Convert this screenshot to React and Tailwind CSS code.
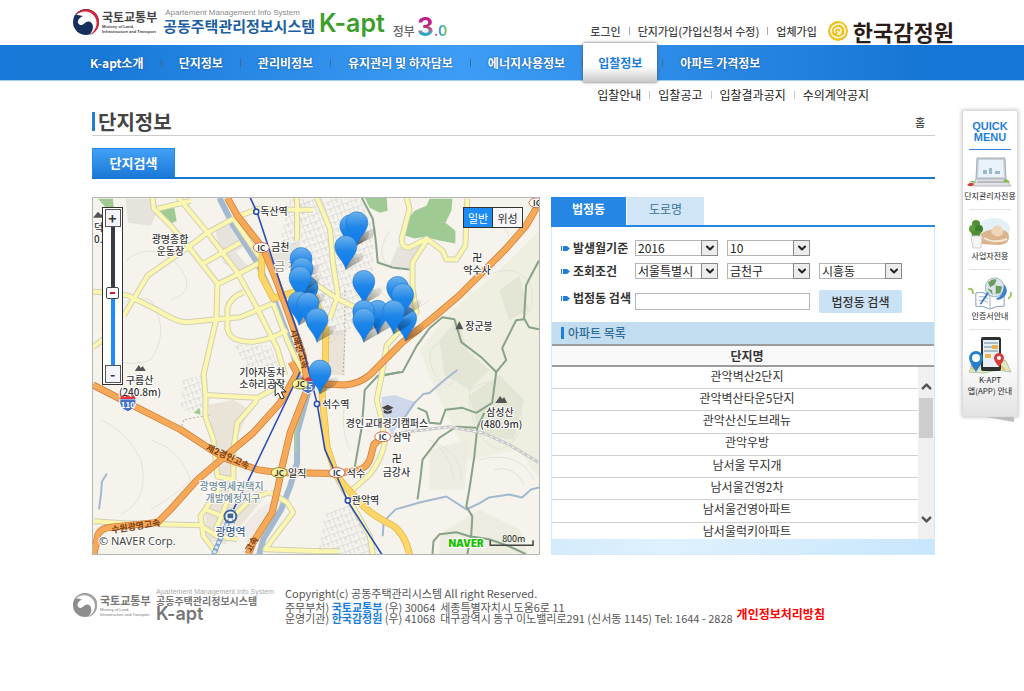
import React, { useState } from "react";
import { ChevronDown, ChevronUp } from "lucide-react";

const topLinks = ["로그인", "단지가입(가입신청서 수정)", "업체가입"];
const menus = [
  "K-apt소개",
  "단지정보",
  "관리비정보",
  "유지관리 및 하자담보",
  "에너지사용정보",
  "입찰정보",
  "아파트 가격정보",
];
const subMenus = ["입찰안내", "입찰공고", "입찰결과공지", "수의계약공지"];
const apartments = [
  "관악벽산2단지",
  "관악벽산타운5단지",
  "관악산신도브래뉴",
  "관악우방",
  "남서울 무지개",
  "남서울건영2차",
  "남서울건영아파트",
  "남서울럭키아파트",
];

// Map coordinates share one system: x 92-540, y 197-555
const localRoads = [
  "M92 291 L127 295 L157 310 Q176 322 186 322 L217 319 L240 317 L273 303",
  "M123 315 L147 275 L187 247 L207 232 L233 218 L257 208 L293 209 L313 209",
  "M152 197 L153 208 L170 225 L187 245 L217 283 L216 318 L203 375",
  "M178 197 L207 232 L237 272 L257 308 L277 348 L285 375",
  "M217 284 L237 274 L260 262",
  "M203 263 L240 242",
  "M157 208 L178 203 L190 200",
  "M227 330 L227 308 Q230 297 243 292",
  "M227 328 Q229 338 238 340 Q258 346 287 330",
  "M273 303 L287 340 L303 375",
  "M233 218 L250 243 L262 260",
  "M297 197 L297 240",
  "M92 347 L104 338",
  "M203 373 L205 395 L205 417 L213 440 L217 477 L233 480",
  "M205 395 L257 398 L277 387",
  "M257 400 L237 423 L233 450 L233 480",
  "M93 522 L123 524 L200 526 L217 537 L237 540",
  "M223 483 L200 517 L203 537 L217 555",
  "M205 510 L230 520 L250 500 L268 493",
  "M235 480 L222 515 L215 530",
  "M270 493 L287 503 L293 513 L265 550 L320 552",
  "M317 197 L330 228 L333 262 L338 295 L330 318",
  "M92 552 L96 545",
  "M407 197 L410 208 L402 238 Q402 248 410 247 L427 238 L443 250 L447 259 L457 259 L466 245 L468 198",
  "M427 240 L413 262 L413 288 L417 312 L387 345 L382 375 L377 400 L382 420 L385 443 Q382 460 370 475 L353 490",
  "M313 282 L337 298 L377 318",
  "M338 480 L370 537 L373 555",
  "M310 552 L339 552",
];
const highways = [
  "M227 197 L237 215 L263 248 L277 282 L290 318 L303 355 L308 387 L290 433 L282 467 L278 487 L272 513 L253 543 L248 555",
  "M92 385 L127 403 L180 430 L223 458 L257 470 L277 473 L337 474 L360 470 Q369 466 371 457 L374 445 L383 437",
  "M93 555 L97 535 Q100 529 110 528 L157 523 L170 510 L197 480 L223 458 L253 433 L280 403 L297 373 L291 362",
  "M540 203 L527 225 L507 248 L460 295 L433 318 L403 342 L370 375 Q359 384 345 385 L303 383",
];
const expressways = [
  "M262 254 L261 275 L273 298 L300 290 L313 292 L326 330 L325 375 L322 393 L327 447 L337 477 L360 503 Q373 517 393 526 Q405 534 410 555",
];
const trails = [
  "M362 197 L373 218 L376 240 L378 262 L393 267 L410 269",
  "M540 260 L532 275 L527 285 L525 318 L530 327 L540 329",
  "M525 319 L517 320 L503 348 L507 360 L497 372",
  "M377 376 L403 372 L417 346 L430 328 L443 317 L455 319 L462 342 L483 358 L497 372 L493 403 L477 413 L463 408 L446 410 L441 424 L430 423 L427 412 L418 408",
  "M477 428 L457 427 L440 438 L423 460 L421 478 L418 500",
  "M485 413 L478 428 L475 457 L470 490 L467 507 L473 517 L472 535 L468 555",
  "M400 372 L377 377 L365 390 L362 427 L358 450 L355 467",
  "M433 555 L434 542 L440 535 L457 533 L470 537 L490 540 L510 547 L527 555",
];
const streams = [
  "M458 370 L445 380 L430 393 L424 394 L415 403 L400 425",
  "M383 537 L384 522 L396 510 L420 503 L447 497 L467 510 L480 504 L490 498 L510 495 L523 498 L532 490 L540 488",
  "M106 474 L101 482 L100 495 L98 510",
];
const contours = [
  "M100 330 Q120 290 150 300 Q170 330 150 360 Q120 370 100 350",
  "M125 260 Q150 240 175 262 Q200 290 170 300",
  "M100 420 Q125 430 140 460 Q150 500 120 515",
  "M150 440 Q180 450 190 480 Q170 500 150 510",
  "M430 350 Q445 335 455 350 Q470 370 450 385 Q430 380 430 350",
  "M480 280 Q510 260 530 280 Q540 310 520 320",
  "M470 390 Q500 370 520 400 Q530 440 500 450 Q470 440 470 390",
  "M480 460 Q520 450 535 480 M495 470 Q515 465 525 485",
  "M430 440 Q450 450 455 480 M440 445 Q462 455 462 480",
  "M430 300 Q405 320 380 290 M390 230 Q370 260 400 270",
  "M345 400 Q340 430 350 450 M480 230 Q500 215 510 235",
];
const markers = [
  [351, 225],
  [357, 222],
  [346, 246],
  [364, 281],
  [398, 287],
  [406, 318],
  [403, 294],
  [378, 311],
  [364, 311],
  [364, 319],
  [394, 311],
  [301, 258],
  [307, 287],
  [302, 268],
  [300, 277],
  [299, 302],
  [308, 303],
  [317, 319],
  [320, 371],
];
const labels = [
  ["독산역", 260, 214],
  ["광명종합", 151, 242],
  ["운동장", 156, 254],
  ["금천", 271, 250],
  ["약수사", 464, 274],
  ["장군봉", 466, 330],
  ["구름산", 125, 384],
  ["(240.8m)", 118, 396],
  ["기아자동차", 239, 376],
  ["소하리공장", 239, 388],
  ["석수역", 322, 408],
  ["경인교대경기캠퍼스", 346, 427],
  ["삼막", 393, 441],
  ["삼성산", 487, 416],
  ["(480.9m)", 481, 428],
  ["금강사", 383, 476],
  ["석수", 347, 477],
  ["일직", 288, 477],
  ["관악역", 352, 505],
];

const Taegeuk = ({ gray, className }) => (
  <svg viewBox="0 0 28 28" className={className} aria-hidden="true">
    <circle cx="14" cy="14" r="13" fill={gray ? "#8d8d8d" : "#16305e"} />
    <path d="M5 5 C11 -1 22 0 26 9 C29 18 24 25 18 27 C23 22 24 16 19 11 C15 8 9 10 5 5Z" fill={gray ? "#a3a3a3" : "#d6243b"} />
    <path
      d="M4 7 C10 2 18 2 23 9 C27 16 23 24 17 27 C22 23 22 16 18 14 C14 12 12 18 8 17 C4 15 6 10 11 8 C8 7 6 7 4 7Z"
      fill="#fff"
    />
    <path d="M5 14 C8 20 11 18 14 15 C18 12 22 16 20 21 C18 26 10 27 6 23 C3 20 3 17 5 14Z" fill={gray ? "#8d8d8d" : "#16305e"} />
  </svg>
);

const Badge = ({ x, y, text, yellow }) => (
  <g>
    <ellipse
      cx={x}
      cy={y}
      rx="8"
      ry="5"
      fill={yellow ? "#f7f1a0" : "#fff"}
      stroke={yellow ? "#8d8a3c" : "#c9694a"}
    />
    <text x={x} y={y + 3} textAnchor="middle" className="text-[8px] font-bold" fill="#333">
      {text}
    </text>
  </g>
);

const Shield = ({ x, y, text }) => (
  <g>
    <path d={`M${x - 8} ${y - 5} h16 q2 9 -8 13 q-10 -4 -8 -13z`} fill="#4a72c4" stroke="#fff" />
    <path d={`M${x - 8} ${y - 5} l2 -4 l3 2 l3 -2 l3 2 l3 -2 l2 4z`} fill="#e0383c" />
    <text x={x} y={y + 4} textAnchor="middle" className="text-[8px] font-bold" fill="#fff">
      {text}
    </text>
  </g>
);

const MapDrawing = () => (
  <svg
    viewBox="92 197 448 358"
    preserveAspectRatio="xMidYMid slice"
    className="block h-full w-full"
    role="img"
    aria-label="지도"
  >
    <defs>
      <linearGradient id="pin" x1="0" y1="0" x2="0" y2="1">
        <stop offset="0" stopColor="#6db2ee" />
        <stop offset="0.45" stopColor="#1f86e8" />
        <stop offset="1" stopColor="#0879ee" />
      </linearGradient>
      <linearGradient id="shade" x1="0" y1="1" x2="1" y2="0">
        <stop offset="0" stopColor="#000" stopOpacity="0.65" />
        <stop offset="1" stopColor="#000" stopOpacity="0" />
      </linearGradient>
      <pattern
        id="blocks"
        width="9"
        height="7"
        patternUnits="userSpaceOnUse"
        patternTransform="rotate(-20)"
      >
        <path d="M0 0 H9 M0 0 V7 M5 0 V4" stroke="#cfd0d3" strokeWidth="1" fill="none" />
      </pattern>
    </defs>
    <rect x="92" y="197" width="448" height="358" fill="#f5f3eb" />

    {/* terrain and built-up areas */}
    <path d="M420 350 L450 312 L500 270 L540 230 V480 L520 450 L470 460 L440 400Z" fill="#eeefe1" />
    <path d="M440 340 L458 318 L468 350 L490 370 L470 390 L445 375Z M470 395 L500 375 L525 400 L515 440 L480 435Z M500 290 L520 275 L530 310 L510 320Z" fill="#e3e6d4" />
    <path d="M430 450 L470 440 L465 490 L430 490Z M440 535 L480 510 L520 530 L530 555 H440Z" fill="#ecede0" />
    <path d="M125 198 H155 L157 210 L150 225 L127 222Z M215 230 L232 222 L245 245 L222 260Z M265 250 L300 240 V265 L272 272Z" fill="#e6e2dc" />
    <path d="M398 246 L420 246 L410 268 L390 265Z M232 248 L250 268 L236 270 L222 262Z" fill="#e6e2dc" />
    <path d="M208 405 L233 400 L250 410 L235 440 L232 478 H218Z M205 500 L225 482 L260 488 L262 500 L225 545 L205 540Z M330 330 L345 330 L345 375 L328 375Z" fill="#e9e3d8" />
    <path d="M258 510 L278 498 L265 535 L248 548 L240 530Z" fill="#efeae3" />
    <path d="M298 198 H360 L373 225 L374 290 L350 330 L328 345 L305 290Z" fill="url(#blocks)" />
    <path d="M182 380 L203 375 L205 415 L180 410Z M325 515 L350 505 L380 555 H318Z M310 198 L295 245 L280 240 L290 198Z M233 345 L270 345 L280 370 L250 372Z" fill="url(#blocks)" />
    <path d="M406 235 L405 222 L415 210 L427 205 L430 198 H453 L452 210 L446 222 L456 230 V243 L440 240 L425 236 L415 238Z" fill="#a0ca93" />
    <path d="M365 197 H387 L388 210 L380 212 L370 207Z M157 209 L173 203 L176 220 L168 224Z M97 198 H112 L113 208 L104 206Z M193 413 L199 408 L200 415Z" fill="#a0ca93" />
    <path d="M382 397 L395 395 L415 402 L408 415 L400 425 L392 434 L382 420Z" fill="#cfd8ea" />
    {contours.map((d) => (
      <path key={d} d={d} fill="none" stroke="#e2e3d6" />
    ))}

    {/* water */}
    <g fill="none" stroke="#a3b9cf" strokeLinejoin="round">
      <path d="M219 197 L233 225 L257 262 L275 302 L290 342 L298 372 L308 393 L297 433 L297 463 L290 487 L281 510 L263 540 L259 555" strokeWidth="6" />
      {streams.map((d) => (
        <path key={d} d={d} strokeWidth="2" />
      ))}
    </g>
    <path d="M305 400 L295 433 L296 452" stroke="#a9cf9f" strokeWidth="2" fill="none" />

    {trails.map((d) => (
      <path key={d} d={d} fill="none" stroke="#87a287" strokeWidth="2" strokeLinejoin="round" />
    ))}
    <path d="M385 437 L400 433 L450 427 L483 433 L510 445 L540 463" fill="none" stroke="#c9c9c9" strokeWidth="3" />
    <path d="M385 437 L400 433 L450 427 L483 433 L510 445 L540 463" fill="none" stroke="#fff" strokeWidth="1" strokeDasharray="3 3" />
    <path d="M345 290 L345 340 L343 375 M180 430 L183 420 L210 415" fill="none" stroke="#b9a88f" strokeDasharray="2 2" />

    {/* roads: casing first, fill over it */}
    <g fill="none" strokeLinejoin="round">
      {localRoads.map((d) => (
        <path key={d} d={d} stroke="#d0cfb8" strokeWidth="6" />
      ))}
      {localRoads.map((d) => (
        <path key={d} d={d} stroke="#fcf7ae" strokeWidth="4" />
      ))}
      {expressways.map((d) => (
        <path key={d} d={d} stroke="#dfb953" strokeWidth="7" />
      ))}
      {expressways.map((d) => (
        <path key={d} d={d} stroke="#fed666" strokeWidth="5.5" />
      ))}
      {highways.map((d) => (
        <path key={d} d={d} stroke="#cf7f36" strokeWidth="7" />
      ))}
      {highways.map((d) => (
        <path key={d} d={d} stroke="#f7a95a" strokeWidth="5.5" />
      ))}
      <path d="M250 197 L257 212 L270 252 L283 292 L295 325 L306 360 L317 403 L325 450 L337 477 L348 502 L382 555" stroke="#2b4cb5" strokeWidth="1.6" />
      <path d="M300 372 L247 483 L233 510" stroke="#2b4cb5" strokeWidth="1.6" />
      <path d="M233 510 L213 555" stroke="#7fa3cf" strokeWidth="5" />
      <path d="M233 510 L213 555" stroke="#dbe9f5" strokeWidth="3" strokeDasharray="3 2" />
    </g>
    {[[256, 211], [317, 404], [348, 501]].map(([x, y]) => (
      <circle key={y} cx={x} cy={y} r="2.6" fill="#fff" stroke="#2b4cb5" strokeWidth="1.6" />
    ))}

    <g className="text-[10px] font-medium" fill="#333" stroke="#fff" strokeWidth="2" paintOrder="stroke" strokeLinejoin="round">
      {labels.map(([name, x, y]) => (
        <text key={name} x={x} y={y}>
          {name}
        </text>
      ))}
      <text x="274" y="271" className="text-xs" fill="#a89a86">금 천</text>
      <text x="199" y="491" fill="#6f8a96">광명역세권택지</text>
      <text x="205" y="503" fill="#6f8a96">개발예정지구</text>
      <text x="215" y="537" className="text-[11px]" fill="#3f6699">광명역</text>
      <text x="93" y="230">덕산</text>
      <text x="93" y="242">0.7m)</text>
      <text x="473" y="260">卍</text>
      <text x="392" y="462">卍</text>
    </g>
    <g className="text-[9px] font-bold" fill="#7b3f12">
      <text transform="translate(205 450) rotate(25)">제2경인고속</text>
      <text transform="translate(111 534) rotate(-9)">수원광명고속</text>
      <text transform="translate(290 330) rotate(72)">서해안고속</text>
      <text transform="translate(250 554) rotate(-60)">고속</text>
    </g>
    {/* mountains and campus cap */}
    <path d="M92 217 l5 -6 l3 3 l2 -1 l2 4z M134 371 l4 -6 l2 3 l2 -2 l3 5z M496 403 l5 -7 l2 3 l2 -2 l3 6z M456 329 l4 -8 l4 8z" fill="#555" />
    <path d="M382 408 l6 -3 l6 3 l-6 3z M384 410 v3 q4 2 8 0 v-3 l-4 2z" fill="#444" />
    <circle cx="230" cy="517" r="6" fill="#fff" stroke="#3f6699" strokeWidth="2" />
    <rect x="227" y="514" width="6" height="5" rx="1" fill="#3f6699" />
    <path d="M228 520 l-2 4 M232 520 l2 4" stroke="#3f6699" />
    <Shield x={127} y={404} text="110" />
    <Shield x={308} y={386} text="15" />
    <Badge x={261} y={247} text="IC" />
    <Badge x={538} y={202} text="IC" />
    <Badge x={383} y={437} text="IC" />
    <Badge x={337} y={473} text="IC" />
    <Badge x={300} y={384} text="JC" yellow />
    <Badge x={279} y={473} text="JC" yellow />

    {markers.map(([x, y]) => (
      <g key={`${x}-${y}`}>
        <path d={`M${x} ${y + 23} L${x + 3} ${y + 10} L${x + 20} ${y + 5} L${x + 16} ${y + 14}Z`} fill="url(#shade)" opacity="0.7" />
        <path
          d={`M${x} ${y + 23} C${x - 2} ${y + 14} ${x - 11} ${y + 9} ${x - 11} ${y} A11 11 0 0 1 ${x + 11} ${y} C${x + 11} ${y + 9} ${x + 2} ${y + 14} ${x} ${y + 23}Z`}
          fill="url(#pin)"
          stroke="#1d74cb"
          strokeWidth="0.6"
        />
      </g>
    ))}

    <path d="M275 382 v14 l3 -3 l3 6 l3 -1 l-3 -6 h5z" fill="#fff" stroke="#222" />
    <text x="98" y="546" className="font-['Noto_Sans'] text-[11px]" fill="#444" stroke="#fff" strokeWidth="2" paintOrder="stroke">
      © NAVER Corp.
    </text>
    <text x="449" y="548" className="font-[Inter] text-[10px] font-black" fill="#19c000" stroke="#fff" strokeWidth="2" paintOrder="stroke">
      NAVER
    </text>
    <text x="503" y="543" className="text-[9px]" fill="#222">800m</text>
    <path d="M491 541 v5 h43 v-5" fill="none" stroke="#444" strokeWidth="1.5" />
  </svg>
);

const SelectBox = ({ id, label, options }) => (
  <div className="relative w-[83px]">
    <select
      id={id}
      aria-label={label}
      className="block h-4 w-full appearance-none border border-[#b5b5b5] bg-white pl-[2px] text-xs leading-[14px] text-[#222]"
    >
      {options.map((o) => (
        <option key={o}>{o}</option>
      ))}
    </select>
    <span className="pointer-events-none absolute top-0 right-0 flex h-4 w-[17px] items-center justify-center border border-[#8a8a8a] bg-[#ececec]">
      <ChevronDown size={12} strokeWidth={4} className="text-[#222]" />
    </span>
  </div>
);

const FieldLabel = ({ htmlFor, children }) => (
  <label htmlFor={htmlFor} className="-mr-[9px] flex h-4 w-[74px] shrink-0 items-center gap-[3px] self-start text-xs leading-4 font-bold whitespace-nowrap text-[#333]">
    <svg viewBox="0 0 9 5" className="h-[5px] w-[9px] shrink-0" aria-hidden="true">
      <path d="M0 0h1v5h-1z M2 0h4l3 2.5l-3 2.5h-4z" fill="#1f7fd8" />
    </svg>
    {children}
  </label>
);

const LaptopIcon = () => (
  <svg viewBox="0 0 46 34" className="h-[34px] w-[46px]" aria-hidden="true">
    <path d="M10 2 h28 l1 21 h-30z" fill="#c9d1d9" stroke="#a4abb3" />
    <path d="M12 4 h24 l1 17 h-26z" fill="#eaf2f9" />
    <path d="M16 18 v-4 h4 v4 M22 18 v-6 h3 v6 M28 18 v-3 h5 v3" fill="#9db7cd" />
    <path d="M9 23 h30 l5 7 h-38z" fill="#dfe2e5" stroke="#b3b8bd" />
    <path d="M11 25 h26 l2 2 h-29z" fill="#b5bbc1" />
    <path d="M0 29 q4 -4 7 -1 q-2 4 -7 1z" fill="#cf3b3b" />
    <path d="M2 26 q5 -3 7 1 M36 25 q3 -4 7 1 q-4 2 -7 -1z" fill="#86b94b" />
  </svg>
);

const OfficeIcon = () => (
  <svg viewBox="0 0 42 34" className="h-[34px] w-[42px]" aria-hidden="true">
    <ellipse cx="25" cy="13" rx="16" ry="11" fill="#e4f0f7" />
    <path d="M12 18 q8 -6 17 -4 q11 -1 11 7 q0 8 -12 8 l-15 -1z" fill="#d9b48e" />
    <path d="M22 16 q3 -9 9 -6 q5 4 2 9 q-6 4 -11 -3z" fill="#f0d6b8" />
    <path d="M15 22 q10 6 23 1" stroke="#f6e6d2" strokeWidth="2" fill="none" />
    <circle cx="7" cy="8" r="4" fill="#4f8f36" />
    <circle cx="4" cy="13" r="4" fill="#5d9d3f" />
    <circle cx="10" cy="13" r="4" fill="#3f7f2c" />
    <path d="M2 15 h10 l-1 5 h-8z" fill="#4f8f36" />
    <path d="M2 20 h11 l-1 12 h-8z" fill="#f4f4f4" stroke="#cfcfcf" />
  </svg>
);

const GlobeIcon = () => (
  <svg viewBox="0 0 46 36" className="h-[34px] w-[46px]" aria-hidden="true">
    <path d="M8 18 q8 -2 15 3 q7 -5 15 -3 v14 q-8 -1 -15 3 q-7 -4 -15 -3z" fill="#fff" stroke="#7f9bb5" />
    <path d="M23 21 v13 M11 22 q6 -1 10 2 M11 26 q6 -1 10 2" stroke="#9ab0c4" fill="none" />
    <circle cx="28" cy="12" r="10" fill="#dbe5ea" stroke="#9fb4c2" />
    <path d="M21 7 q5 -5 9 -3 l-2 5 l-5 3z M29 10 l7 1 l-2 7 l-5 1z M20 13 l5 2 l1 5z" fill="#6a9c62" />
    <path d="M38 9 q6 6 0 13 q-5 5 -9 2 q8 -2 9 -15z" fill="#3f7fd0" />
    <path d="M12 30 l8 -13 l2 1 l-8 12z" fill="#3c78c2" />
    <path d="M0 14 q5 -2 5 5 M42 24 q4 -2 3 -7" stroke="#9cc65b" strokeWidth="2" fill="none" />
  </svg>
);

const PhoneIcon = () => (
  <svg viewBox="0 0 44 38" className="h-[38px] w-11" aria-hidden="true">
    <path d="M1 36 l6 -14 l9 3 l11 -3 l11 3 l5 11 l-14 -2 l-13 3z" fill="#dce8c8" stroke="#b7c79c" />
    <path d="M4 33 l12 -6 l12 8 M27 25 l10 9" stroke="#f0c25a" strokeWidth="2" fill="none" />
    <rect x="13" y="1" width="20" height="34" rx="2" fill="#2d3033" />
    <rect x="15" y="4" width="16" height="27" fill="#e9f0f4" />
    <path d="M16 7 h14 M16 11 h9 M16 15 h14" stroke="#a6bdca" strokeWidth="2" />
    <path d="M24 9 h6 v4 h-6z M17 18 h6 v4 h-6z" fill="#eab24f" />
    <path d="M8 36 q-7 -10 -7 -14 a7 7 0 0 1 14 0 q0 4 -7 14z" fill="#2a7fcc" />
    <circle cx="8" cy="22" r="4" fill="#fff" />
    <path d="M31 31 q-5 -6 -5 -9 a5 5 0 0 1 10 0 q0 3 -5 9z" fill="#d63d3d" />
    <circle cx="31" cy="22" r="2" fill="#fff" />
  </svg>
);

const quickLinks = [
  { icon: LaptopIcon, lines: ["단지관리자전용"] },
  { icon: OfficeIcon, lines: ["사업자전용"] },
  { icon: GlobeIcon, lines: ["인증서안내"] },
  { icon: PhoneIcon, lines: ["K-APT", "앱(APP) 안내"] },
];

const Header = () => (
  <header>
    <div className="flex h-[45px] items-start justify-between pr-[70px] pl-[72px]">
      <div className="flex items-start">
        <a href="#ministry" className="flex gap-[2px] pt-2">
          <Taegeuk className="h-7 w-7" />
          <span className="pt-[2px] text-[#444]">
            <span className="block text-xs leading-[14px] font-bold">국토교통부</span>
            <span className="block font-['Liberation_Sans'] text-[4px] leading-[5px] font-bold whitespace-nowrap">
              Ministry of Land,
              <br />
              Infrastructure and Transport
            </span>
          </span>
        </a>
        <a href="#home" className="ml-[6px] flex items-start">
          <span className="pt-2">
            <span className="block pl-[2px] font-['Liberation_Sans'] text-[8px] leading-[9px] text-[#8a8a8a]">
              Apartement Management Info System
            </span>
            <span className="block text-[15px] leading-[18px] font-bold text-[#1c5fa0]">공동주택관리정보시스템</span>
          </span>
          <span className="ml-1 pt-2 font-[Inter] text-[25px] leading-[30px] font-semibold text-[#3c9f2c]">K-apt</span>
        </a>
        <span className="ml-2 flex items-baseline pt-[14px]">
          <span className="text-xs leading-6 font-medium text-[#666]">정부</span>
          <span className="ml-[2px] bg-linear-to-b from-[#c0208f] from-30% via-[#b9306f] via-50% to-[#2aa8c8] to-75% bg-clip-text font-[Inter] text-[26px] leading-[26px] font-bold text-transparent">
            3
          </span>
          <span className="bg-linear-to-r from-[#c02a8f] via-[#2aa5d8] to-[#8dc63f] bg-clip-text font-[Inter] text-sm leading-4 font-bold text-transparent">
            .0
          </span>
        </span>
      </div>
      <div className="flex items-center pt-5">
        <ul className="flex text-[11px] leading-[18px] font-medium text-[#444]">
          {topLinks.map((t, i) => (
            <li key={t} className="flex items-center">
              {i > 0 && <span className="mx-2 h-2 w-px bg-[#aaa]" />}
              <a href="#member">{t}</a>
            </li>
          ))}
        </ul>
        <a href="#kab" className="ml-[10px] flex items-center gap-1">
          <svg viewBox="0 0 22 22" className="h-[22px] w-[22px]" aria-hidden="true">
            <circle cx="11" cy="11" r="10" fill="#eebf1d" />
            <path d="M5 15 Q2 8 8 5 Q14 2 17 7 M17 7 Q21 14 14 17 Q9 19 5 15 M8 13 Q6 9 10 8 Q14 7 14 11 Q14 15 10 14 M10 11 L13 13" fill="none" stroke="#fff8dc" strokeWidth="1.6" />
          </svg>
          <span className="text-[22px] leading-[22px] font-bold text-[#2c1d18]">한국감정원</span>
        </a>
      </div>
    </div>

    <nav className="h-[36px] border-b border-[#9fd0f8] bg-linear-to-r from-[#1879d8] from-10% via-[#3d9df6] via-45% to-[#1676d5] to-90%">
      <ul className="flex h-[35px] items-center pl-[73px] text-xs font-bold whitespace-nowrap text-white">
        {menus.map((m, i) =>
          m === "입찰정보" ? (
            <li key={m} className="mr-[5px] h-[39px]">
              <a
                href="#bid"
                className="flex h-full items-center bg-linear-to-b from-white from-60% to-[#c9c9c9] px-[15px] text-[#1b7ddb] shadow-[0_0_3px_#555]"
              >
                {m}
              </a>
            </li>
          ) : (
            <li key={m} className="flex items-center">
              {i === 6 && <span className="h-2 w-px bg-[#3c6b9a]" />}
              <a href="#menu" className="px-[17px] [text-shadow:0_0_2px_#0a4a94]">
                {m}
              </a>
              {i < 5 && <span className="h-2 w-px bg-[#3c6b9a]" />}
            </li>
          )
        )}
      </ul>
    </nav>
    <ul className="flex h-[27px] items-center justify-end pr-[155px] text-xs leading-4 text-[#222]">
      {subMenus.map((s, i) => (
        <li key={s} className="flex items-center">
          {i > 0 && <span className="mx-2 h-2 w-px bg-[#c5c5c5]" />}
          <a href="#sub">{s}</a>
        </li>
      ))}
    </ul>
  </header>
);

const MapPanel = () => {
  const [zoom, setZoom] = useState(52);
  return (
    <section className="relative h-[358px] min-w-0 flex-1 overflow-hidden border border-[#b5b5b5]">
      <MapDrawing />
      <div className="absolute top-[9px] left-[9px] flex h-[178px] w-[21px] flex-col items-center border border-[#333] bg-white p-px">
        <button
          type="button"
          aria-label="확대"
          onClick={() => setZoom(zoom + 5)}
          className="h-[18px] w-4 shrink-0 border border-[#555] bg-[#f4f4fa] text-sm leading-[14px] font-bold text-[#333]"
        >
          +
        </button>
        <input
          type="range"
          aria-label="지도 축척"
          min="0"
          max="100"
          value={zoom}
          onChange={(e) => setZoom(Number(e.target.value))}
          className="min-h-0 w-[13px] flex-1 appearance-none bg-[linear-gradient(#3a3a44_47%,#1e8cff_47%)] bg-size-[4px_100%] bg-center bg-no-repeat [direction:rtl] [writing-mode:vertical-lr] [&::-webkit-slider-thumb]:h-3 [&::-webkit-slider-thumb]:w-[13px] [&::-webkit-slider-thumb]:appearance-none [&::-webkit-slider-thumb]:rounded-xs [&::-webkit-slider-thumb]:border [&::-webkit-slider-thumb]:border-[#444] [&::-webkit-slider-thumb]:bg-[#fff] [&::-webkit-slider-thumb]:bg-[linear-gradient(#d8122a,#d8122a)] [&::-webkit-slider-thumb]:bg-size-[5px_2px] [&::-webkit-slider-thumb]:bg-center [&::-webkit-slider-thumb]:bg-no-repeat"
        />
        <button
          type="button"
          aria-label="축소"
          onClick={() => setZoom(zoom - 5)}
          className="h-[18px] w-4 shrink-0 border border-[#555] bg-[#f4f4fa] text-sm leading-[14px] font-bold text-[#333]"
        >
          -
        </button>
      </div>
      <div className="absolute top-[9px] right-[16px] flex h-[21px] border border-[#333] text-[11px] leading-4">
        <button type="button" className="w-[29px] border-r border-[#333] bg-[#1b8bf5] text-white">
          일반
        </button>
        <button type="button" className="w-[29px] bg-[#f7f7fa] text-[#333]">
          위성
        </button>
      </div>
    </section>
  );
};

const SearchPanel = () => {
  const [keyword, setKeyword] = useState("");
  return (
    <section className="flex h-[358px] w-[384px] shrink-0 flex-col">
      <div className="flex border-b-2 border-[#2586e3] text-xs">
        <button type="button" className="h-7 w-[75px] bg-[#2586e3] pb-1 font-bold text-white">
          법정동
        </button>
        <button type="button" className="ml-px h-7 w-[77px] bg-[#d0e6f6] pb-1 text-[#3a7196]">
          도로명
        </button>
      </div>
      <div className="flex min-h-0 flex-1 flex-col border border-t-0 border-[#d5eaf8]">
        <form className="flex flex-col px-[9px] pt-[13px] pb-[9px]" onSubmit={(e) => e.preventDefault()}>
          <div className="flex h-4 gap-[9px]">
            <FieldLabel htmlFor="year">발생월기준</FieldLabel>
            <SelectBox id="year" label="년도" options={["2016", "2015"]} />
            <SelectBox id="month" label="월" options={["10", "11", "12"]} />
          </div>
          <div className="mt-[7px] flex h-4 gap-[9px]">
            <FieldLabel htmlFor="sido">조회조건</FieldLabel>
            <SelectBox id="sido" label="시도" options={["서울특별시"]} />
            <SelectBox id="gu" label="시군구" options={["금천구"]} />
            <SelectBox id="dong" label="동" options={["시흥동"]} />
          </div>
          <div className="mt-[11px] flex items-center gap-[9px]">
            <FieldLabel htmlFor="keyword">법정동 검색</FieldLabel>
            <input
              id="keyword"
              type="text"
              value={keyword}
              onChange={(e) => setKeyword(e.target.value)}
              className="h-[17px] w-[175px] border border-[#b5b5b5] bg-white px-1 text-xs"
            />
            <button type="submit" className="h-[23px] w-[83px] rounded-xs bg-[#cbe1f4] text-xs leading-4 font-medium text-[#333]">
              법정동 검색
            </button>
          </div>
        </form>
        <h2 className="flex h-[22px] shrink-0 items-center gap-1 bg-[#c2dcf0] pl-[9px] text-xs font-medium text-[#2f6c9a]">
          <span className="h-3 w-[3px] bg-[#1f7fd8]" />
          아파트 목록
        </h2>
        <div id="list-title" className="flex h-[23px] shrink-0 items-center justify-center border-y-2 border-[#9c9c9c] bg-[#f9f9f9] pl-2 text-xs font-bold text-[#333]">
          단지명
        </div>
        <div className="flex h-[172px] shrink-0 overflow-hidden">
          <table aria-labelledby="list-title" className="h-[178px] flex-1 text-center text-xs leading-4 text-[#333]">
            <tbody>
              {apartments.map((name) => (
                <tr key={name} className="border-b border-[#d0d0d0]">
                  <td className="pb-1 pl-6">{name}</td>
                </tr>
              ))}
            </tbody>
          </table>
          <div className="flex w-4 flex-col items-center bg-[#f0f0f0] pt-3 pb-3">
            <button type="button" aria-label="위로">
              <ChevronUp size={15} strokeWidth={4} className="text-[#555]" />
            </button>
            <span className="mt-1 h-10 w-[14px] bg-[#cdcdcd]" />
            <button type="button" aria-label="아래로" className="mt-auto">
              <ChevronDown size={15} strokeWidth={4} className="text-[#555]" />
            </button>
          </div>
        </div>
        <div className="flex-1 bg-linear-to-r from-[#d3ebfc] via-[#dff1fd] via-30% to-[#c8e6fd]" />
      </div>
    </section>
  );
};

const QuickMenu = () => (
  <aside className="mt-[2px] w-14 shrink-0 self-start">
    <div className="flex flex-col items-center border border-[#ddd] bg-linear-to-b from-white from-80% to-[#e3e3e3] px-[6px] pb-5 shadow-[0_0_4px_#bbb]">
      <h2 className="w-full border-b border-[#2a86de] pt-[10px] pb-[6px] text-center font-['Liberation_Sans'] text-[11px] leading-[11px] font-bold text-[#1f7fd8]">
        QUICK
        <br />
        MENU
      </h2>
      {quickLinks.map(({ icon: Icon, lines }, i) => (
        <a
          key={lines[0]}
          href="#quick"
          className={`flex w-full flex-col items-center pt-[6px] text-[8px] leading-[10px] whitespace-nowrap text-[#222] ${
            i < 3 ? "border-b border-[#e2e2e2] pb-2" : ""
          }`}
        >
          <Icon />
          {lines.map((line) => (
            <span key={line} className="mt-px">
              {line}
            </span>
          ))}
        </a>
      ))}
    </div>
    <svg viewBox="0 0 56 5" className="h-[5px] w-full" aria-hidden="true">
      <path d="M24 0 H52 V5Z" fill="#bdbdbd" />
    </svg>
  </aside>
);

const Footer = () => (
  <footer className="flex items-start pt-[33px] pb-8 pl-[72px] whitespace-nowrap">
    <Taegeuk gray className="mt-1 h-[26px] w-[26px]" />
    <div className="mt-[5px] ml-[2px] w-[52px] text-[#777]">
      <p className="text-[11px] leading-[14px] font-bold">국토교통부</p>
      <p className="font-['Liberation_Sans'] text-[4px] leading-[5px]">
        Ministry of Land,
        <br />
        Infrastructure and Transport
      </p>
    </div>
    <div className="ml-[4px] w-[115px] text-[#777]">
      <p className="font-['Liberation_Sans'] text-[7px] leading-[7px] text-[#aaa]">Apartement Management Info System</p>
      <p className="text-[10px] leading-[12px] font-bold">공동주택관리정보시스템</p>
      <p className="font-[Inter] text-lg leading-[14px] font-semibold">K-apt</p>
    </div>
    <address className="ml-[14px] text-[11px] leading-[11px] text-[#555] not-italic">
      <p className="pb-[3px]">Copyright(c) 공동주택관리시스템 All right Reserved.</p>
      <p>
        주무부처) <strong className="text-[#1b7ddb]">국토교통부</strong> (우) 30064 &nbsp;세종특별자치시 도움6로 11
      </p>
      <p>
        운영기관) <strong className="text-[#1b7ddb]">한국감정원</strong> (우) 41068 &nbsp;대구광역시 동구 이노밸리로291 (신서동 1145) Tel: 1644 - 2828
      </p>
    </address>
    <a href="#privacy" className="mt-[18px] ml-1 text-xs leading-4 font-bold text-[#f00]">
      개인정보처리방침
    </a>
  </footer>
);

const App = () => {
  return (
    <div className="min-h-screen bg-white font-['Noto_Sans_CJK_KR',sans-serif]">
      <Header />
      <div className="flex gap-[27px] pr-[6px] pl-[92px]">
        <main className="min-w-0 flex-1">
          <div className="flex h-[28px] items-center justify-between border-b border-[#ccc] pr-[10px]">
            <h1 className="flex items-center gap-[3px] text-xl leading-5 font-bold text-[#444]">
              <span className="h-[19px] w-[3px] bg-[#1f7fd8]" />
              단지정보
            </h1>
            <a href="#home" className="text-[11px] leading-4 text-[#222]">
              홈
            </a>
          </div>
          <div className="mt-3 border-b-2 border-[#1676d0]">
            <button
              type="button"
              className="block h-[29px] w-[83px] border border-b-0 border-[#2586e3] bg-linear-to-b from-[#42a0f5] to-[#1a79d8] text-[13px] leading-4 font-bold text-white"
            >
              단지검색
            </button>
          </div>
          <div className="mt-[18px] flex gap-[11px]">
            <MapPanel />
            <SearchPanel />
          </div>
        </main>
        <QuickMenu />
      </div>
      <Footer />
    </div>
  );
};

export default App;
